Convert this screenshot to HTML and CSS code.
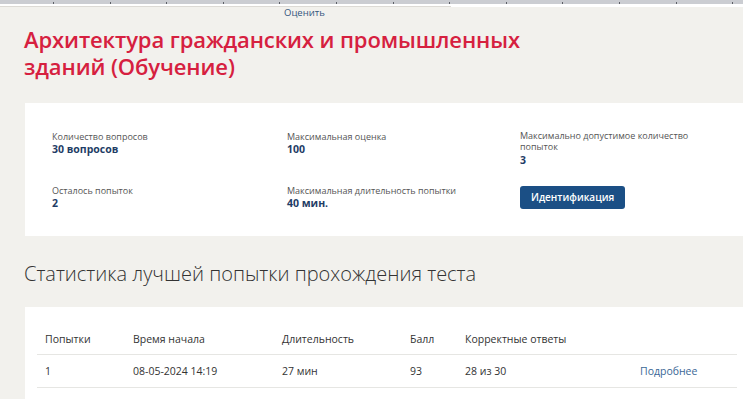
FILE: index.html
```html
<!DOCTYPE html>
<html lang="ru">
<head>
    <meta charset="UTF-8">
    <meta name="viewport" content="width=device-width, initial-scale=1.0">
    <title>Архитектура гражданских и промышленных зданий</title>
    <link rel="stylesheet" href="styles.css">
</head>
<body>
    <div class="toolbar"></div>
    <div class="ruler">
        <div class="ruler-left"></div>
        <div class="ruler-right"></div>
    </div>

    <div class="page">
        <a class="rate" href="#">Оценить</a>

        <h1 class="title">Архитектура гражданских и промышленных зданий (Обучение)</h1>

        <div class="card info">
            <div class="item">
                <div class="label">Количество вопросов</div>
                <div class="value">30 вопросов</div>
            </div>
            <div class="item">
                <div class="label">Максимальная оценка</div>
                <div class="value">100</div>
            </div>
            <div class="item">
                <div class="label narrow">Максимально допустимое количество попыток</div>
                <div class="value">3</div>
            </div>
            <div class="item">
                <div class="label">Осталось попыток</div>
                <div class="value">2</div>
            </div>
            <div class="item">
                <div class="label">Максимальная длительность попытки</div>
                <div class="value">40 мин.</div>
            </div>
            <div class="item">
                <button class="btn">Идентификация</button>
            </div>
        </div>

        <h2 class="subtitle">Статистика лучшей попытки прохождения теста</h2>

        <div class="card stats">
            <table>
                <colgroup>
                    <col style="width: 88px">
                    <col style="width: 149px">
                    <col style="width: 128px">
                    <col style="width: 55px">
                    <col style="width: 175px">
                    <col>
                </colgroup>
                <thead>
                    <tr>
                        <th>Попытки</th>
                        <th>Время начала</th>
                        <th>Длительность</th>
                        <th>Балл</th>
                        <th>Корректные ответы</th>
                        <th></th>
                    </tr>
                </thead>
                <tbody>
                    <tr>
                        <td>1</td>
                        <td>08-05-2024 14:19</td>
                        <td>27 мин</td>
                        <td>93</td>
                        <td>28 из 30</td>
                        <td><a href="#">Подробнее</a></td>
                    </tr>
                </tbody>
            </table>
        </div>
    </div>
</body>
</html>
```

FILE: styles.css
```css
html, body {
    margin: 0;
    padding: 0;
    background-color: #ffffff;
    overflow: hidden;
}

body {
    font-family: "Open Sans", "Noto Sans", sans-serif;
    color: #333333;
}

.toolbar {
    height: 4px;
    background-color: #cbcdd2;
    background-image: repeating-linear-gradient(to right, transparent 0, transparent 53px, #5c5f66 53px, #5c5f66 54px, transparent 54px, transparent 56.6px);
    background-size: 100% 2px;
    background-position: 0 2px;
    background-repeat: no-repeat;
}

.ruler {
    display: flex;
    height: 3px;
}

.ruler-left {
    width: 451px;
    background-color: #ffffff;
    border-bottom: 1px solid #dcdad5;
    box-sizing: border-box;
}

.ruler-right {
    flex: 1;
    background-color: #ffffff;
}

.page {
    width: 775px;
    background-color: #f2f1ed;
    overflow: hidden;
}

.rate {
    display: block;
    padding-left: 284px;
    font-size: 9.5px;
    line-height: 12px;
    color: #34557d;
    text-decoration: none;
}

.title {
    margin: 7px 0 0 24px;
    max-width: 520px;
    font-size: 22px;
    line-height: 27px;
    font-weight: 600;
    letter-spacing: -0.1px;
    color: #d6203f;
}

.card {
    margin-left: 25px;
    width: 724px;
    background-color: #ffffff;
    box-sizing: border-box;
}

.info {
    margin-top: 23px;
    padding: 27px 27px 27px;
    display: grid;
    grid-template-columns: 235px 233px 1fr;
    row-gap: 18px;
}

.label {
    font-size: 9px;
    line-height: 13px;
    color: #555555;
}

.label.narrow {
    max-width: 180px;
    line-height: 11px;
    padding-bottom: 2px;
}

.value {
    font-size: 10.5px;
    line-height: 12px;
    font-weight: 700;
    color: #1f3d66;
}

.btn {
    height: 23px;
    padding: 0 11px;
    border: none;
    border-radius: 3px;
    background-color: #1b4f85;
    color: #ffffff;
    font-family: "Open Sans", sans-serif;
    font-size: 10px;
    font-weight: 600;
    cursor: pointer;
}

.subtitle {
    margin: 24px 0 0 24px;
    font-size: 20px;
    line-height: 28px;
    font-weight: 300;
    color: #333333;
}

.stats {
    margin-top: 19px;
    padding: 17px 12px 11px;
}

table {
    width: 700px;
    border-collapse: collapse;
    table-layout: fixed;
    font-size: 10.5px;
}

th, td {
    text-align: left;
    padding: 0 8px;
    border-bottom: 1px solid #e6e6e3;
    color: #333333;
    white-space: nowrap;
}

th {
    height: 30px;
    font-weight: 400;
}

td {
    height: 32px;
}

td a {
    color: #3b6796;
    text-decoration: none;
}
```
